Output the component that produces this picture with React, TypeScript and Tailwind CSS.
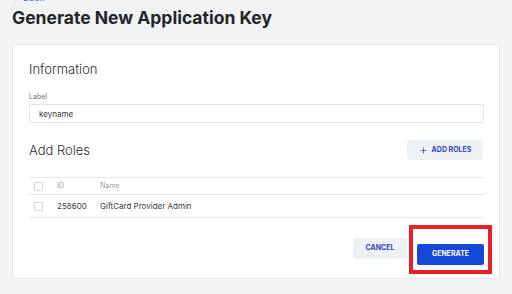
import { Plus } from 'lucide-react';

const roles = [{ id: '258600', name: 'GiftCard Provider Admin' }];

const Checkbox = () => (
    <span className="block w-[9px] h-[9px] border border-[#d4d7dc] rounded-[1px] bg-white" />
);

export default function App() {
    return (
        <div className="w-[512px] h-[294px] overflow-hidden bg-[#f2f3f5] px-3 font-['Inter',sans-serif]">
            {/* back link, mostly scrolled off */}
            <div className="-mt-[7px] h-[10px] text-[9px] leading-[10px] text-[#4a6cf7]">← Back</div>

            <h1 className="mt-[4px] text-[17.5px] leading-[22px] font-bold text-[#24262b]">
                Generate New Application Key
            </h1>

            <div className="mt-[15px] w-[488px] h-[235px] bg-white rounded-[4px] border border-[#e7e9ec] px-[16px] pt-[16px]">
                <h2 className="text-[13px] leading-[16px] text-[#2e3035] font-light">Information</h2>

                <label className="block mt-[16px] text-[7px] leading-[8px] text-[#6b6f76]">Label</label>
                <div className="mt-[3px] h-[19px] w-[455px] border border-[#e3e5e8] rounded-[2px] flex items-center px-[9px] text-[8px] text-[#3a3d42]">
                    keyname
                </div>

                <div className="mt-[17px] flex items-center justify-between">
                    <h2 className="text-[13px] leading-[16px] text-[#2e3035] font-light">Add Roles</h2>
                    <button className="h-[20px] w-[76px] rounded-[3px] bg-[#eef2f7] flex items-center justify-center gap-[4px] text-[7px] font-bold text-[#2c46c4]">
                        <Plus size={9} strokeWidth={2} />
                        ADD ROLES
                    </button>
                </div>

                <div className="mt-[17px] w-[455px] border-t border-[#e6e8eb] text-[8px]">
                    <div className="h-[17px] flex items-center border-b border-[#e6e8eb] text-[#9a9ea5] text-[7px]">
                        <div className="w-[28px] pl-[5px]"><Checkbox /></div>
                        <div className="w-[43px]">ID</div>
                        <div>Name</div>
                    </div>
                    {roles.map((r) => (
                        <div key={r.id} className="h-[23px] flex items-center border-b border-[#e6e8eb] text-[#3a3d42]">
                            <div className="w-[28px] pl-[5px]"><Checkbox /></div>
                            <div className="w-[43px]">{r.id}</div>
                            <div>{r.name}</div>
                        </div>
                    ))}
                </div>

                <div className="mt-[20px] w-[455px] flex justify-end gap-[10px]">
                    <button className="h-[21px] w-[54px] rounded-[3px] bg-[#eef2f7] text-[7px] font-bold text-[#2c46c4]">
                        CANCEL
                    </button>
                    <div className="relative">
                        <button className="h-[21px] w-[67px] rounded-[2px] bg-[#1547d8] text-[7px] font-bold text-white">
                            GENERATE
                        </button>
                        {/* annotation box */}
                        <div className="absolute -left-[8px] -right-[8px] -top-[13px] -bottom-[9px] border-[4px] border-[#e8202a]" />
                    </div>
                </div>
            </div>
        </div>
    );
}
